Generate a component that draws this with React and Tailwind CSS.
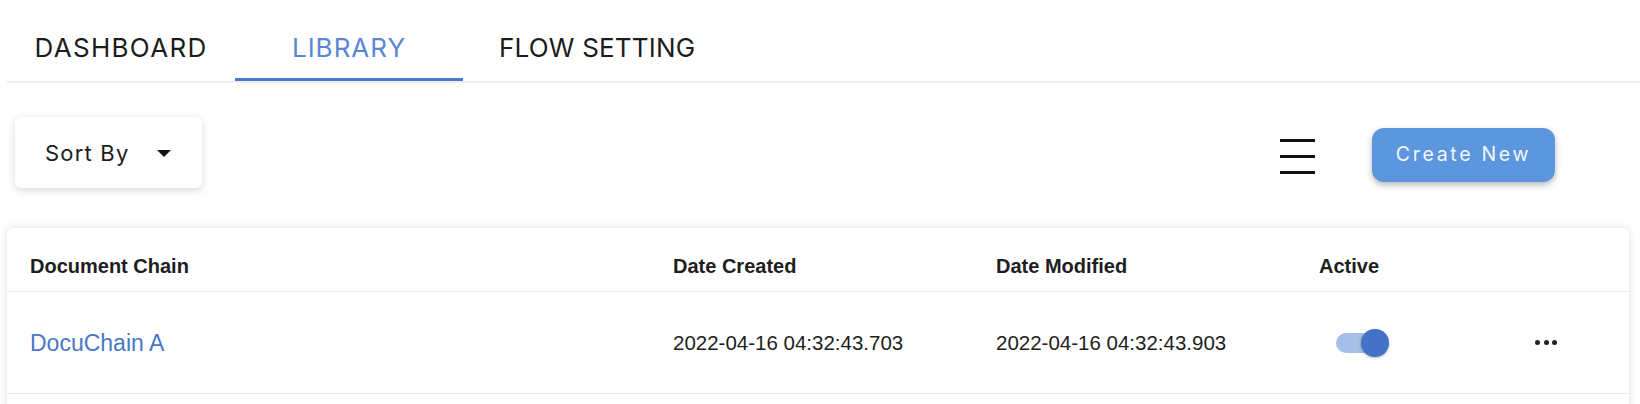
import React from "react";

const tabFont = { fontFamily: "Inter, 'Noto Sans', sans-serif" };

function Tab({ label, active, className, tracking }) {
  return (
    <div className={`relative h-full flex items-center justify-center pt-[15px] ${className}`}>
      <span
        className={`text-[26px] leading-none ${tracking} ${active ? "text-[#5a86d6]" : "text-[#1c1c1c]"}`}
        style={tabFont}
      >
        {label}
      </span>
      {active && <div className="absolute left-0 right-0 bottom-0 h-[3px] bg-[#4b77cf]" />}
    </div>
  );
}

export default function App() {
  return (
    <div className="w-[1640px] h-[404px] bg-white overflow-hidden" style={{ fontFamily: "'Liberation Sans', Arial, sans-serif" }}>
      {/* Tabs */}
      <div className="ml-[7px] h-[83px] border-b-2 border-[#eeeeee] flex items-stretch">
        <Tab label="DASHBOARD" tracking="tracking-[1.3px]" className="w-[228px]" />
        <Tab label="LIBRARY" tracking="tracking-[1px]" active className="w-[228px]" />
        <Tab label="FLOW SETTING" tracking="tracking-[0.2px]" className="pl-[36px]" />
      </div>

      {/* Toolbar */}
      <div className="flex items-start mt-[34px] pl-[15px] pr-[85px]">
        <div className="h-[71px] w-[187px] rounded-[6px] bg-white shadow-[0_2px_9px_rgba(0,0,0,0.16)] flex items-center pl-[30px]">
          <span className="text-[22px] leading-none tracking-[1.2px] text-[#1c1c1c]" style={tabFont}>
            Sort By
          </span>
          <svg className="ml-[28px] mt-[1px]" width="14" height="7" viewBox="0 0 14 7">
            <path d="M0 0 L14 0 L7 7 Z" fill="#111" />
          </svg>
        </div>
        <div className="ml-auto flex items-start">
          <svg className="mt-[22px]" width="35" height="35" viewBox="0 0 35 35">
            <path d="M0 1.5 H35 M0 17.5 H35 M0 33.5 H35" stroke="#111" strokeWidth="3" />
          </svg>
          <button
            className="ml-[57px] mt-[11px] w-[183px] h-[54px] rounded-[12px] bg-[#5b96df] text-[#f3f6fb] text-[19.5px] tracking-[2.7px] shadow-[0_3px_6px_rgba(0,0,0,0.28)] flex items-center justify-center"
            style={tabFont}
          >
            Create New
          </button>
        </div>
      </div>

      {/* Card */}
      <div className="ml-[7px] w-[1622px] mt-[40px] rounded-[6px] bg-white shadow-[0_0_9px_rgba(0,0,0,0.13)] pt-[12px]">
        <div className="grid grid-cols-[643px_323px_323px_216px_1fr] pl-[23px] h-[52px] items-center border-b border-[#ebebeb] text-[20px] font-bold text-[#1e1e1e]">
          <div>Document Chain</div>
          <div>Date Created</div>
          <div>Date Modified</div>
          <div>Active</div>
          <div></div>
        </div>
        <div className="grid grid-cols-[643px_323px_323px_216px_1fr] pl-[23px] h-[102px] items-center border-b border-[#ebebeb] text-[20.5px] text-[#1e1e1e]">
          <div className="text-[#4a78c6] text-[23px] pt-[1px]">DocuChain A</div>
          <div className="pt-[1px]">2022-04-16 04:32:43.703</div>
          <div className="pt-[1px]">2022-04-16 04:32:43.903</div>
          <div>
            <div className="relative ml-[17px] w-[53px] h-[28px]">
              <div className="absolute left-0 top-[4px] w-[48px] h-[20px] rounded-full bg-[#a6bfe8]" />
              <div className="absolute right-0 top-0 w-[28px] h-[28px] rounded-full bg-[#4472c4] shadow-[0_1px_3px_rgba(0,0,0,0.3)]" />
            </div>
          </div>
          <div className="flex items-center gap-[3.5px]">
            <span className="w-[5px] h-[5px] rounded-full bg-[#222]" />
            <span className="w-[5px] h-[5px] rounded-full bg-[#222]" />
            <span className="w-[5px] h-[5px] rounded-full bg-[#222]" />
          </div>
        </div>
        <div className="h-[40px]" />
      </div>
    </div>
  );
}
